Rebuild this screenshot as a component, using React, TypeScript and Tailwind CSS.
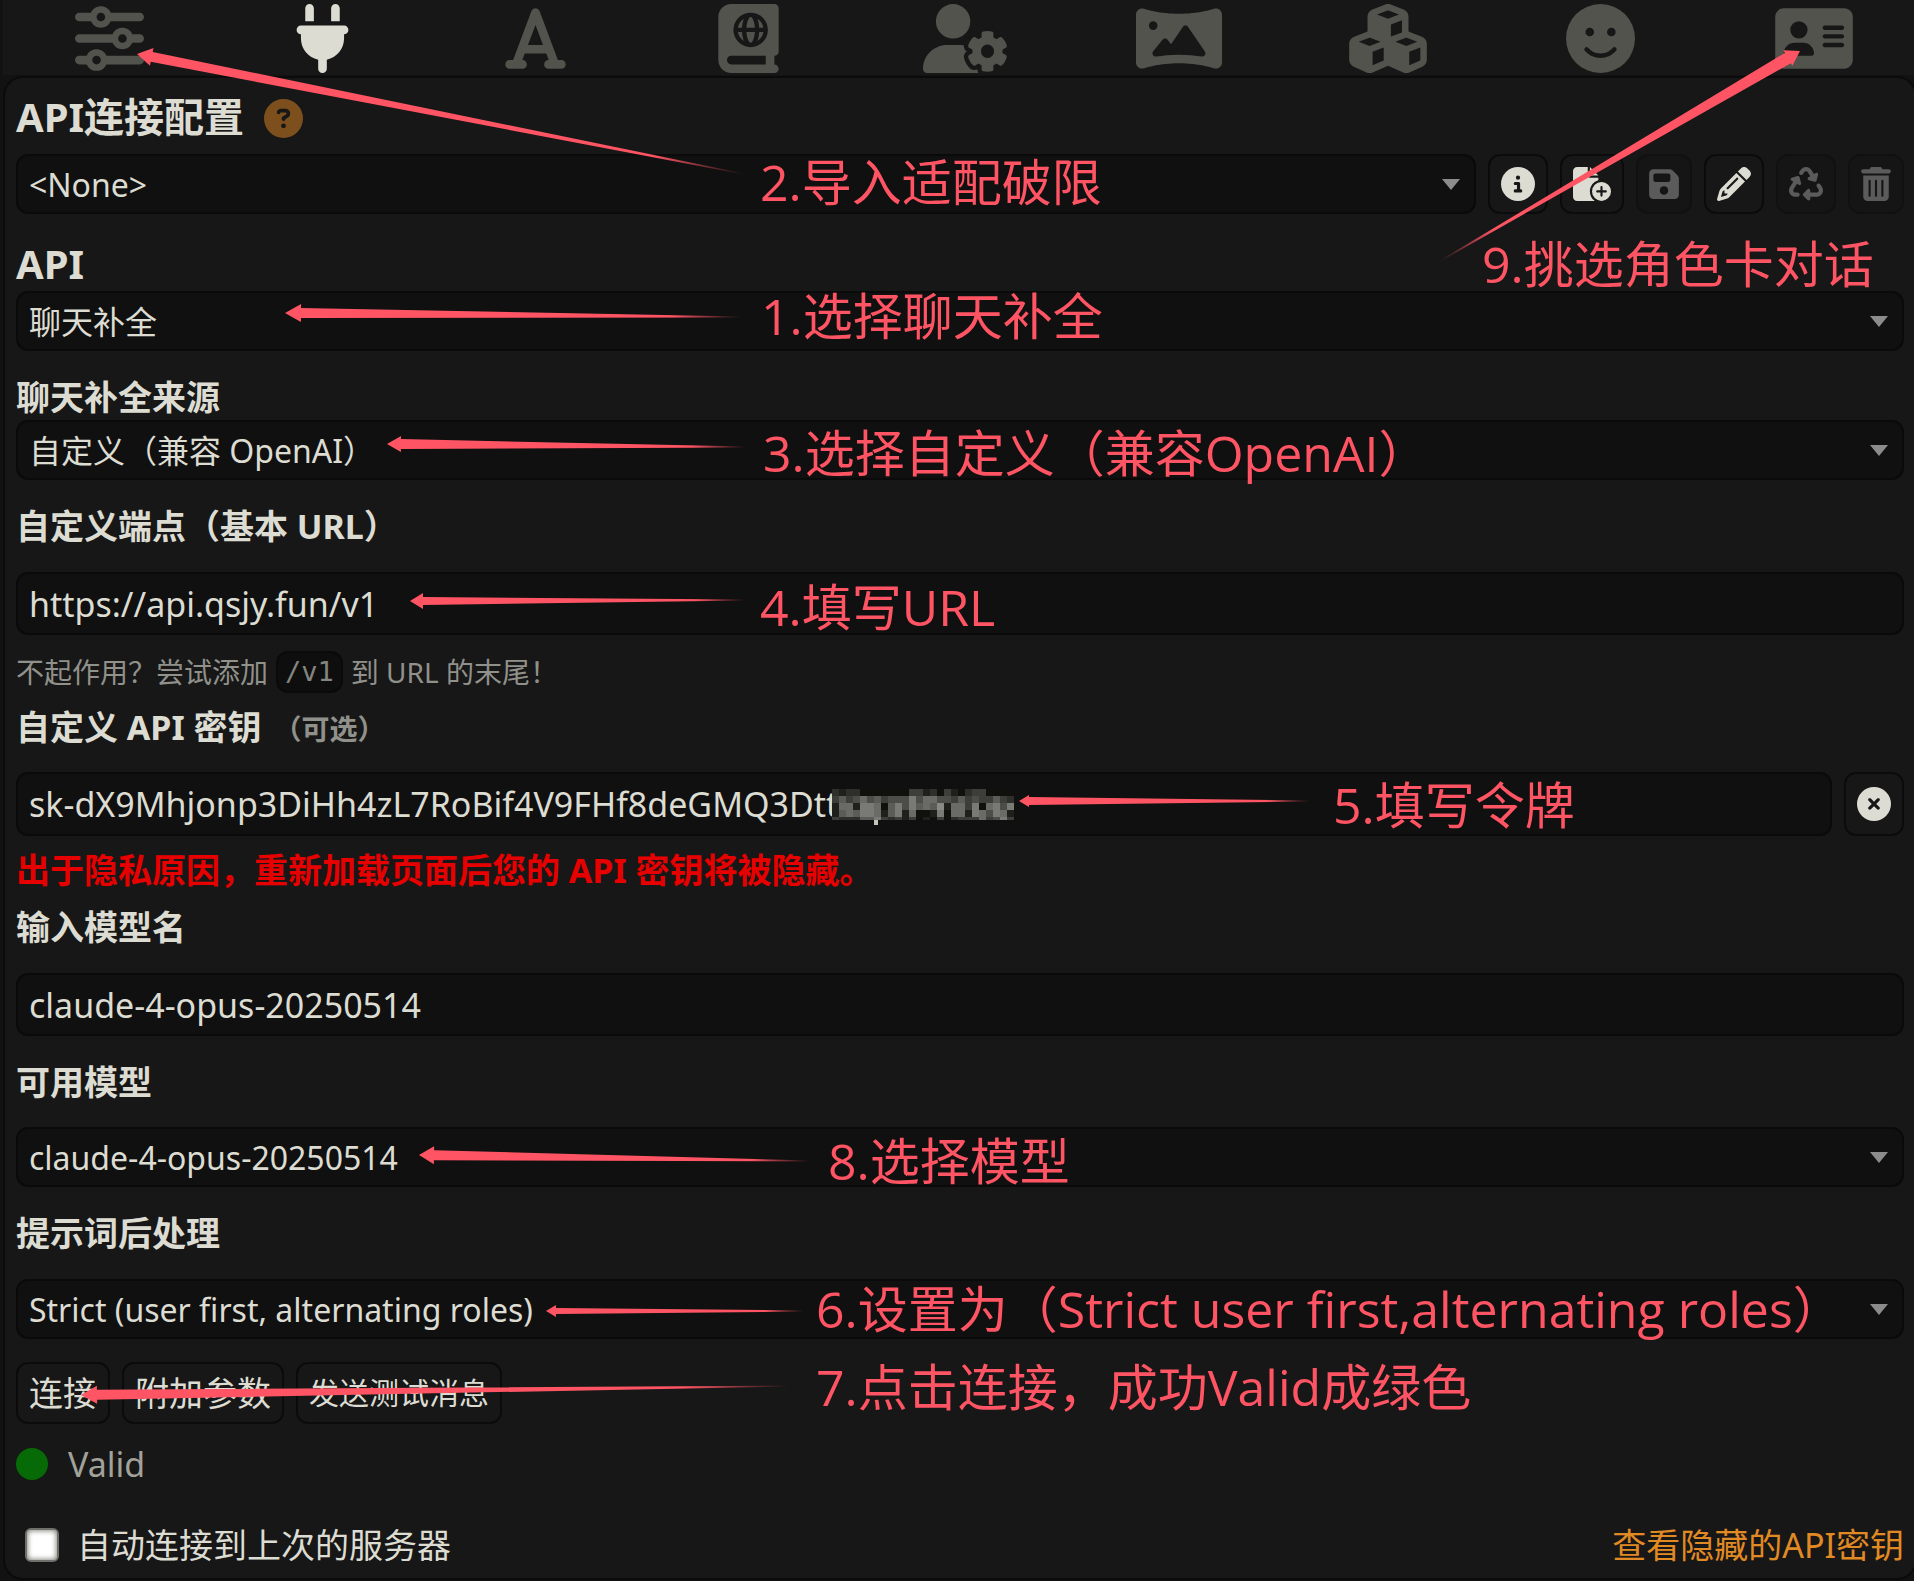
import React, { useState } from "react";
import {
  FaAddressCard,
  FaBookAtlas,
  FaCircleInfo,
  FaCircleQuestion,
  FaCircleXmark,
  FaCubes,
  FaFaceSmile,
  FaFileCirclePlus,
  FaFloppyDisk,
  FaFont,
  FaPanorama,
  FaPencil,
  FaPlug,
  FaRecycle,
  FaSliders,
  FaTrashCan,
  FaUserGear,
} from "react-icons/fa6";

const NAV = [
  { label: "AI 响应配置", Icon: FaSliders, width: "w-[69px]" },
  { label: "API 连接", Icon: FaPlug, width: "w-[69px]", active: true },
  { label: "格式化", Icon: FaFont, width: "w-[69px]" },
  { label: "世界书", Icon: FaBookAtlas, width: "w-[69px]" },
  { label: "用户设置", Icon: FaUserGear, width: "w-[86px]" },
  { label: "背景", Icon: FaPanorama, width: "w-[86px]" },
  { label: "扩展", Icon: FaCubes, width: "w-[78px]" },
  { label: "用户角色", Icon: FaFaceSmile, width: "w-[69px]" },
  { label: "角色管理", Icon: FaAddressCard, width: "w-[78px]" },
];

const FIELD =
  "w-full rounded-xl border-2 border-[#0a0a0a] bg-[#101010] px-[11px] text-[#dcdcd2] outline-none";

function SelectField({ id, value }: { id: string; value: string }) {
  return (
    <div className="relative min-w-0 flex-1">
      <select
        id={id}
        defaultValue={value}
        className={`${FIELD} block h-[60px] appearance-none pt-0.5 text-[32px]`}
      >
        <option value={value}>{value}</option>
      </select>
      <svg
        className="pointer-events-none absolute right-4 top-[25px] h-[11px] w-[18px] fill-[#8c8c8c]"
        viewBox="0 0 18 11"
        aria-hidden="true"
      >
        <path d="M0 0H18L9 11Z" />
      </svg>
    </div>
  );
}

function TextField({ id, value, tall }: { id: string; value: string; tall?: boolean }) {
  const [text, setText] = useState(value);
  return (
    <input
      id={id}
      type="text"
      value={text}
      spellCheck={false}
      onChange={(e) => setText(e.target.value)}
      className={`${FIELD} block min-w-0 flex-1 text-[34px] ${tall ? "h-[64px]" : "h-[63px]"}`}
    />
  );
}

function IconButton({
  label,
  disabled,
  className = "h-[60px]",
  children,
}: {
  label: string;
  disabled?: boolean;
  className?: string;
  children: React.ReactNode;
}) {
  return (
    <button
      type="button"
      aria-label={label}
      disabled={disabled}
      className={`flex shrink-0 items-center justify-center rounded-xl border-2 px-[11px] text-[34px] ${className} ${
        disabled ? "border-[#111111] bg-[#151515] text-[#5b5b5b]" : "border-[#0b0b0b] bg-[#171717] text-[#dcdcd2]"
      }`}
    >
      {children}
    </button>
  );
}

function FieldLabel({ htmlFor, className, children }: { htmlFor: string; className: string; children: React.ReactNode }) {
  return (
    <label htmlFor={htmlFor} className={`block text-[34px] font-bold leading-[40px] ${className}`}>
      {children}
    </label>
  );
}

type Arrow = { tip: [number, number]; tail: [number, number]; head: number; half: number; shaft: number };

const ARROWS: Arrow[] = [
  { tip: [137, 54], tail: [744, 174], head: 15, half: 9, shaft: 5 },
  { tip: [285, 313], tail: [741, 317], head: 16, half: 9, shaft: 5 },
  { tip: [1800, 51], tail: [1440, 261], head: 14, half: 9, shaft: 6 },
  { tip: [387, 444], tail: [746, 447], head: 14, half: 8, shaft: 5 },
  { tip: [410, 601], tail: [746, 600], head: 13, half: 8, shaft: 4 },
  { tip: [1019, 801], tail: [1310, 801], head: 10, half: 6, shaft: 4 },
  { tip: [419, 1155], tail: [810, 1161], head: 15, half: 9, shaft: 5 },
  { tip: [546, 1311], tail: [804, 1311], head: 10, half: 6, shaft: 3 },
  { tip: [81, 1395], tail: [790, 1386], head: 16, half: 9, shaft: 5 },
];

function arrowPoints({ tip, tail, head, half, shaft }: Arrow) {
  const dx = tail[0] - tip[0];
  const dy = tail[1] - tip[1];
  const len = Math.hypot(dx, dy);
  const ux = dx / len;
  const uy = dy / len;
  const at = (along: number, across: number) =>
    `${(tip[0] + ux * along - uy * across).toFixed(1)},${(tip[1] + uy * along + ux * across).toFixed(1)}`;
  return [
    at(0, 0),
    at(head, half),
    at(head, shaft),
    at(len, 0.5),
    at(len, -0.5),
    at(head, -shaft),
    at(head, -half),
  ].join(" ");
}

/* Brightness of each pixelated cell, 0 (background) to 9. */
const MOSAIC = [
  "21220000000331203102330000",
  "35346453444746644353433532",
  "16617760574756581663706747",
  "15657761571600170661764761",
  "32225573231301030233363473",
];

function Annotations() {
  const note = "absolute whitespace-nowrap text-[50px] leading-[60px]";
  return (
    <div className="pointer-events-none absolute inset-0 font-['Open_Sans','Noto_Sans_CJK_SC',sans-serif] text-[#ff5463]">
      <svg className="absolute left-0 top-0" width="1914" height="1580" viewBox="0 0 1914 1580" aria-hidden="true">
        <defs>
          {ARROWS.map((a, i) => (
            <linearGradient
              key={i}
              id={`fade-${i}`}
              gradientUnits="userSpaceOnUse"
              x1={a.tip[0]}
              y1={a.tip[1]}
              x2={a.tail[0]}
              y2={a.tail[1]}
            >
              <stop offset="0.85" stopColor="#ff5463" />
              <stop offset="1" stopColor="#ff5463" stopOpacity="0" />
            </linearGradient>
          ))}
        </defs>
        {MOSAIC.map((row, r) =>
          row.split("").map((v, c) => {
            const g = 16 + Number(v) * 15;
            return (
              <rect
                key={`${r}-${c}`}
                x={832 + c * 7}
                y={789 + r * 7}
                width="7"
                height={r === 4 ? 3 : 7}
                shapeRendering="crispEdges"
                fill={`rgb(${g},${g},${g - 3})`}
              />
            );
          }),
        )}
        <rect x="874" y="820" width="4" height="5" fill="#c4c4bb" />
        {ARROWS.map((a, i) => (
          <polygon key={i} points={arrowPoints(a)} fill={`url(#fade-${i})`} />
        ))}
      </svg>
      <p className={`${note} left-[760px] top-[152px]`}>2.导入适配破限</p>
      <p className={`${note} left-[761px] top-[286px]`}>1.选择聊天补全</p>
      <p className={`${note} left-[1482px] top-[234px]`}>9.挑选角色卡对话</p>
      <p className={`${note} left-[763px] top-[423px]`}>3.选择自定义（兼容OpenAI）</p>
      <p className={`${note} left-[760px] top-[577px]`}>4.填写URL</p>
      <p className={`${note} left-[1333px] top-[775px]`}>5.填写令牌</p>
      <p className={`${note} left-[828px] top-[1131px]`}>8.选择模型</p>
      <p className={`${note} left-[816px] top-[1279px]`}>6.设置为（Strict user first,alternating roles）</p>
      <p className={`${note} left-[816px] top-[1357px]`}>7.点击连接，成功Valid成绿色</p>
    </div>
  );
}

export default function App() {
  return (
    <div
      lang="zh-CN"
      className="relative min-h-screen overflow-hidden bg-[#121212] font-['Noto_Sans','Noto_Sans_CJK_SC',sans-serif] text-[#dcdcd2]"
    >
      <nav className="-mr-[6px] ml-[3px] flex h-[75px] bg-[#171717] pt-1">
        {NAV.map(({ label, Icon, width, active }) => (
          <button
            key={label}
            type="button"
            aria-label={label}
            className={`flex flex-1 items-start justify-center ${active ? "text-[#dcdcd2]" : "text-[#52534d]"}`}
          >
            <span className="flex w-[78px]">
              <Icon className={`mx-auto h-[69px] shrink-0 ${width}`} />
            </span>
          </button>
        ))}
      </nav>

      <main className="-mr-[3px] ml-[3px] mt-px rounded-[20px] border-2 border-[#0b0b0b] bg-[#171717] px-[11px] pb-[13px]">
        <h3 className="mb-3 mt-[17px] flex h-[47px] items-start gap-5 text-[40px] font-bold leading-[43px]">
          <label htmlFor="profile">API连接配置</label>
          <a href="#help" aria-label="帮助" className="self-center text-[#7c4f1c]">
            <FaCircleQuestion className="size-[39px]" />
          </a>
        </h3>
        <div className="flex gap-3">
          <SelectField id="profile" value="<None>" />
          <IconButton label="详情">
            <FaCircleInfo />
          </IconButton>
          <IconButton label="新建">
            <FaFileCirclePlus className="h-[34px] w-[38px]" />
          </IconButton>
          <IconButton label="保存" disabled>
            <FaFloppyDisk className="h-[34px] w-[30px]" />
          </IconButton>
          <IconButton label="编辑">
            <FaPencil />
          </IconButton>
          <IconButton label="重新加载" disabled>
            <FaRecycle />
          </IconButton>
          <IconButton label="删除" disabled>
            <FaTrashCan className="h-[34px] w-[30px]" />
          </IconButton>
        </div>

        <h3 className="mb-1 mt-[26px] text-[40px] font-bold leading-[47px]">
          <label htmlFor="api">API</label>
        </h3>
        <SelectField id="api" value="聊天补全" />

        <FieldLabel htmlFor="source" className="mb-[3px] mt-[26px]">
          聊天补全来源
        </FieldLabel>
        <SelectField id="source" value="自定义（兼容 OpenAI）" />

        <FieldLabel htmlFor="endpoint" className="mb-[26px] mt-[26px]">
          自定义端点（基本 URL）
        </FieldLabel>
        <TextField id="endpoint" value="https://api.qsjy.fun/v1" />

        <p className="mt-4 flex h-[42px] items-center gap-2 text-[28px] leading-[42px] text-[#91918b]">
          <span>不起作用？尝试添加</span>
          <code className="rounded-xl border-2 border-[#0a0a0a] bg-[#0e0e0e] px-[7px] font-['DejaVu_Sans_Mono',monospace] text-[27px] leading-[38px] text-[#85857f]">
            /v1
          </code>
          <span>到 URL 的末尾！</span>
        </p>

        <FieldLabel htmlFor="key" className="mb-[25px] mt-[14px] flex items-baseline gap-3">
          自定义 API 密钥
          <span className="text-[28px] leading-[28px] text-[#91918b]">（可选）</span>
        </FieldLabel>
        <div className="flex gap-3">
          <TextField id="key" tall value="sk-dX9Mhjonp3DiHh4zL7RoBif4V9FHf8deGMQ3Dtt" />
          <IconButton label="清除密钥" className="h-[64px]">
            <FaCircleXmark />
          </IconButton>
        </div>
        <p className="mt-[14px] text-[34px] font-bold leading-[40px] text-[#e60000]">
          出于隐私原因，重新加载页面后您的 API 密钥将被隐藏。
        </p>

        <FieldLabel htmlFor="model-name" className="mb-[26px] mt-[17px]">
          输入模型名
        </FieldLabel>
        <TextField id="model-name" value="claude-4-opus-20250514" />

        <FieldLabel htmlFor="model" className="mb-[25px] mt-[26px]">
          可用模型
        </FieldLabel>
        <SelectField id="model" value="claude-4-opus-20250514" />

        <FieldLabel htmlFor="post" className="mb-[26px] mt-[26px]">
          提示词后处理
        </FieldLabel>
        <SelectField id="post" value="Strict (user first, alternating roles)" />

        <div className="mt-[23px] flex gap-3">
          <button type="button" className="h-[62px] rounded-xl border-2 border-[#0b0b0b] px-[11px] text-[34px] leading-[40px]">
            连接
          </button>
          <button type="button" className="h-[62px] rounded-xl border-2 border-[#0b0b0b] px-[11px] text-[34px] leading-[40px]">
            附加参数
          </button>
          <button type="button" className="h-[62px] rounded-xl border-2 border-[#0b0b0b] px-[11px] text-[30px] leading-[40px]">
            发送测试消息
          </button>
        </div>

        <div role="status" className="mt-5 flex items-center gap-5 text-[34px] leading-[40px] text-[#a2a29b]">
          <span className="size-8 rounded-full bg-[#066b06]" />
          Valid
        </div>

        <div className="mt-[41px] flex items-center justify-between text-[34px] leading-[40px]">
          <label className="flex items-center gap-[18px]">
            <input
              type="checkbox"
              className="ml-[9px] size-[34px] appearance-none rounded-md border-2 border-[#6f6f6b] bg-white shadow-[inset_0_0_5px_1px_#8a8a80]"
            />
            自动连接到上次的服务器
          </label>
          <a href="#keys" className="text-[#e18a24]">
            查看隐藏的API密钥
          </a>
        </div>
      </main>

      <Annotations />
    </div>
  );
}
